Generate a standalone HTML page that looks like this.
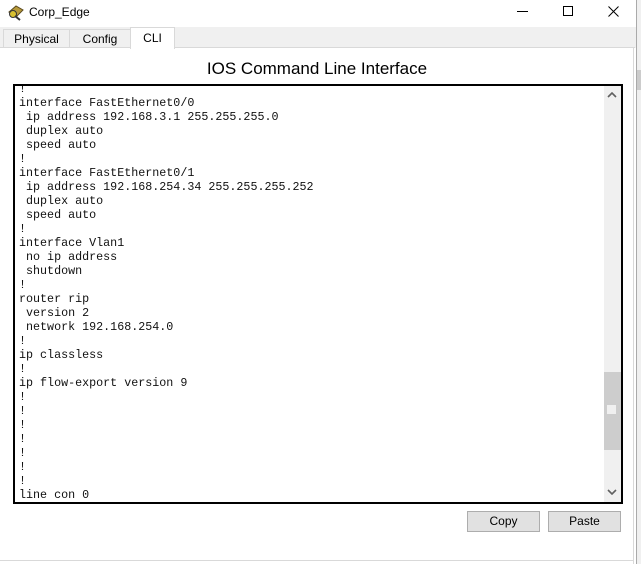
<!DOCTYPE html>
<html><head><style>
*{margin:0;padding:0;box-sizing:border-box}
body{width:641px;height:564px;background:#fff;position:relative;overflow:hidden;font-family:"Liberation Sans",sans-serif}
.abs{position:absolute}
pre{font-family:"Liberation Mono",monospace;font-size:11.7px;line-height:14px;color:#111;}
</style></head><body>
<div class="abs" style="left:636px;top:0;width:5px;height:564px;background:#f0f0f0;border-left:1px solid #aaa"></div>
<div class="abs" style="left:637px;top:70px;width:4px;height:20px;background:#ccc"></div>
<svg class="abs" style="left:7px;top:3px" width="18" height="18" viewBox="0 0 18 18"><path d="M2 9 L9 3 L16 7 L10 13 Z" fill="#b89a3a" stroke="#5a4a20"/><circle cx="6" cy="11" r="3.5" fill="#d8c030" stroke="#333"/><path d="M8 13 L13 17" stroke="#333" stroke-width="2"/></svg>
<div class="abs" style="left:29px;top:5px;font-size:12px;color:#000">Corp_Edge</div>
<div class="abs" style="left:517px;top:11px;width:11px;height:1px;background:#000"></div>
<div class="abs" style="left:563px;top:6px;width:10px;height:10px;border:1px solid #000"></div>
<svg class="abs" style="left:608px;top:6px" width="11" height="11"><path d="M0.5 0.5L10.5 10.5M10.5 0.5L0.5 10.5" stroke="#000" stroke-width="1"/></svg>
<div class="abs" style="left:0;top:27px;width:636px;height:21px;background:#f0f0f0"></div>
<div class="abs" style="left:3px;top:29px;width:67px;height:19px;border:1px solid #d9d9d9;border-bottom:none;background:#f0f0f0;font-size:12px;text-align:center;line-height:19px">Physical</div>
<div class="abs" style="left:69px;top:29px;width:62px;height:19px;border:1px solid #d9d9d9;border-bottom:none;background:#f0f0f0;font-size:12px;text-align:center;line-height:19px">Config</div>
<div class="abs" style="left:130px;top:27px;width:45px;height:22px;border:1px solid #d9d9d9;border-bottom:none;background:#fff;font-size:12px;text-align:center;line-height:21px">CLI</div>
<div class="abs" style="left:0;top:47px;width:130px;height:1px;background:#d9d9d9"></div>
<div class="abs" style="left:175px;top:47px;width:460px;height:1px;background:#d9d9d9"></div>
<div class="abs" style="left:633px;top:47px;width:1px;height:517px;background:#d9d9d9"></div>
<div class="abs" style="left:0;top:560px;width:634px;height:1px;background:#d9d9d9"></div>
<div class="abs" style="left:0;top:59px;width:634px;text-align:center;font-size:17px;color:#000">IOS Command Line Interface</div>
<div class="abs" style="left:13px;top:84px;width:610px;height:420px;border:2px solid #000;overflow:hidden">
<pre class="abs" style="left:4px;top:-4px">!
interface FastEthernet0/0
 ip address 192.168.3.1 255.255.255.0
 duplex auto
 speed auto
!
interface FastEthernet0/1
 ip address 192.168.254.34 255.255.255.252
 duplex auto
 speed auto
!
interface Vlan1
 no ip address
 shutdown
!
router rip
 version 2
 network 192.168.254.0
!
ip classless
!
ip flow-export version 9
!
!
!
!
!
!
!
line con 0</pre>
<div class="abs" style="left:589px;top:0;width:17px;height:416px;background:#f0f0f0"></div>
<div class="abs" style="left:589px;top:286px;width:17px;height:78px;background:#cdcdcd"></div>
<div class="abs" style="left:592px;top:319px;width:9px;height:9px;background:#f0f0f0"></div>
<svg class="abs" style="left:592px;top:6px" width="10" height="6"><path d="M1 5L5 1L9 5" stroke="#606060" stroke-width="1.6" fill="none"/></svg>
<svg class="abs" style="left:592px;top:403px" width="10" height="6"><path d="M1 1L5 5L9 1" stroke="#606060" stroke-width="1.6" fill="none"/></svg>
</div>
<div class="abs" style="left:467px;top:511px;width:73px;height:21px;background:#e1e1e1;border:1px solid #adadad;font-size:12px;text-align:center;line-height:19px">Copy</div>
<div class="abs" style="left:548px;top:511px;width:73px;height:21px;background:#e1e1e1;border:1px solid #adadad;font-size:12px;text-align:center;line-height:19px">Paste</div>
</body></html>
